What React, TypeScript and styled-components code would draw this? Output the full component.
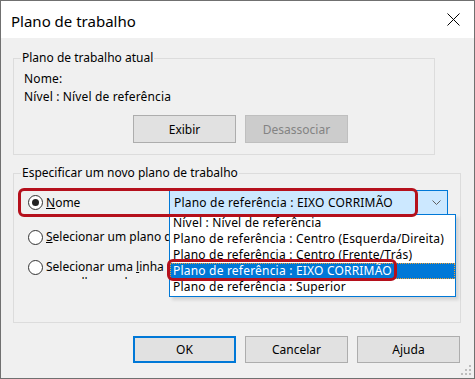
import React from 'react';
import styled, { createGlobalStyle } from 'styled-components';

const GlobalStyle = createGlobalStyle`
  html, body {
    margin: 0;
    padding: 0;
    background: #ffffff;
  }
  * {
    box-sizing: border-box;
  }
`;

const FONT = `"Noto Sans", "Liberation Sans", sans-serif`;

const Window = styled.div`
  width: 475px;
  height: 379px;
  border: 1px solid #707070;
  background: #f0f0f0;
  display: flex;
  flex-direction: column;
  font-family: ${FONT};
  font-size: 12px;
  color: #000;
  position: relative;
  overflow: hidden;
`;

const TitleBar = styled.div`
  height: 37px;
  background: #ffffff;
  display: flex;
  align-items: center;
  justify-content: space-between;
  padding: 0 14px 0 10px;
  flex-shrink: 0;
`;

const Title = styled.div`
  font-size: 15px;
  line-height: 20px;
  margin-top: 2px;
`;

const Body = styled.div`
  flex: 1;
  display: flex;
  flex-direction: column;
  padding: 12px 0 0 12px;
`;

const Group = styled.fieldset<{ $w: number; $h: number; $mt?: number }>`
  position: relative;
  margin: ${(p) => p.$mt ?? 0}px 0 0 0;
  padding: 0 7px;
  width: ${(p) => p.$w}px;
  height: ${(p) => p.$h}px;
  border: 1px solid #dcdcdc;
  min-width: 0;
`;

const Legend = styled.legend`
  padding: 0 1px;
  line-height: 16px;
  font-size: 12px;
`;

const Line = styled.div<{ $mt?: number }>`
  line-height: 16px;
  margin-top: ${(p) => p.$mt ?? 0}px;
  padding-left: 3px;
  letter-spacing: 0.15px;
`;

const ButtonRow = styled.div<{ $mt: number; $pl: number }>`
  display: flex;
  gap: 9px;
  margin-top: ${(p) => p.$mt}px;
  padding-left: ${(p) => p.$pl}px;
`;

const Button = styled.button<{ $h?: number; $default?: boolean }>`
  width: 103px;
  height: ${(p) => p.$h ?? 28}px;
  background: #e1e1e1;
  border: ${(p) => (p.$default ? '2px solid #0078d7' : '1px solid #adadad')};
  font-family: ${FONT};
  font-size: 12px;
  color: #000;
  padding: 0;
  &:disabled {
    background: #cccccc;
    border-color: #bfbfbf;
    color: #838383;
  }
`;

const OptionRow = styled.div<{ $mt: number; $h: number }>`
  position: relative;
  display: flex;
  align-items: center;
  margin-top: ${(p) => p.$mt}px;
  height: ${(p) => p.$h}px;
  padding-left: 7px;
`;

const Radio = styled.span<{ $checked?: boolean; $top?: boolean }>`
  width: 15px;
  height: 15px;
  border-radius: 50%;
  border: 1px solid #333333;
  background: #ffffff;
  flex-shrink: 0;
  display: flex;
  align-items: center;
  justify-content: center;
  align-self: ${(p) => (p.$top ? 'flex-start' : 'center')};
  margin-top: ${(p) => (p.$top ? 1 : 0)}px;
  &::after {
    content: '';
    display: ${(p) => (p.$checked ? 'block' : 'none')};
    width: 7px;
    height: 7px;
    border-radius: 50%;
    background: #222222;
  }
`;

const Label = styled.span<{ $w: number; $clip?: number }>`
  margin-left: 3px;
  width: ${(p) => p.$w}px;
  line-height: 16px;
  white-space: ${(p) => (p.$clip ? 'normal' : 'nowrap')};
  height: ${(p) => (p.$clip ? `${p.$clip}px` : 'auto')};
  overflow: hidden;
  align-self: ${(p) => (p.$clip ? 'flex-start' : 'center')};
  u {
    text-decoration: underline;
  }
`;

const ComboWrap = styled.div`
  position: relative;
  letter-spacing: 0.2px;
`;

const Combo = styled.div`
  width: 279px;
  height: 25px;
  background: #cce8ff;
  border: 1px solid #0078d7;
  display: flex;
  align-items: center;
  justify-content: space-between;
  padding: 0 6px 0 4px;
`;

const DropList = styled.div`
  position: absolute;
  top: 24px;
  left: 0;
  width: 287px;
  background: #ffffff;
  border: 1px solid #0078d7;
  padding: 0 0 1px 0;
  box-shadow: 3px 3px 3px rgba(0, 0, 0, 0.12);
  z-index: 2;
`;

const Item = styled.div<{ $selected?: boolean }>`
  height: 16px;
  line-height: 16px;
  padding-left: 3px;
  white-space: nowrap;
  background: ${(p) => (p.$selected ? '#0078d7' : 'transparent')};
  color: ${(p) => (p.$selected ? '#ffffff' : '#000000')};
  outline: ${(p) => (p.$selected ? '1px dotted #f3a133' : 'none')};
  outline-offset: -1px;
`;

const Mark = styled.div<{ $l: number; $t: number; $w: number; $h: number }>`
  position: absolute;
  left: ${(p) => p.$l}px;
  top: ${(p) => p.$t}px;
  width: ${(p) => p.$w}px;
  height: ${(p) => p.$h}px;
  border: 3px solid #b5101c;
  border-radius: 6px;
  pointer-events: none;
  z-index: 3;
`;

const Footer = styled.div`
  display: flex;
  gap: 9px;
  margin-top: 13px;
  padding-left: 120px;
`;

const Grip = styled.svg`
  position: absolute;
  right: 3px;
  bottom: 3px;
`;

const items = [
  'Nível : Nível de referência',
  'Plano de referência : Centro (Esquerda/Direita)',
  'Plano de referência : Centro (Frente/Trás)',
  'Plano de referência : EIXO CORRIMÃO',
  'Plano de referência : Superior',
];

export default function App() {
  return (
    <>
      <GlobalStyle />
      <Window>
        <TitleBar>
          <Title>Plano de trabalho</Title>
          <svg width="13" height="13" viewBox="0 0 13 13">
            <path d="M0.5 0.5 L12.5 12.5 M12.5 0.5 L0.5 12.5" stroke="#000" strokeWidth="1" />
          </svg>
        </TitleBar>
        <Body>
          <Group $w={422} $h={105}>
            <Legend>Plano de trabalho atual</Legend>
            <Line $mt={5}>Nome:</Line>
            <Line $mt={2}>Nível : Nível de referência</Line>
            <ButtonRow $mt={10} $pl={112}>
              <Button>Exibir</Button>
              <Button disabled>Desassociar</Button>
            </ButtonRow>
          </Group>
          <Group $w={448} $h={158} $mt={10}>
            <Legend>Especificar um novo plano de trabalho</Legend>
            <OptionRow $mt={9} $h={25}>
              <Mark $l={-3} $t={-2} $w={400} $h={29} />
              <Radio $checked />
              <Label $w={123}>
                <u>N</u>ome
              </Label>
              <ComboWrap>
                <Combo>
                  <span>Plano de referência : EIXO CORRIMÃO</span>
                  <svg width="9" height="5" viewBox="0 0 9 5">
                    <path d="M0.5 0.5 L4.5 4.5 L8.5 0.5" stroke="#606060" fill="none" strokeWidth="1" />
                  </svg>
                </Combo>
                <DropList>
                  {items.map((t, i) => (
                    <Item key={t} $selected={i === 3}>
                      {t}
                    </Item>
                  ))}
                </DropList>
                <Mark $l={-2} $t={69} $w={230} $h={22} />
              </ComboWrap>
            </OptionRow>
            <OptionRow $mt={14} $h={16}>
              <Radio />
              <Label $w={140}>
                <u>S</u>elecionar um plano de referência
              </Label>
            </OptionRow>
            <OptionRow $mt={14} $h={20}>
              <Radio $top />
              <Label $w={122} $clip={20}>
                Selecionar uma <u>l</u>inha e escolher o plano
              </Label>
            </OptionRow>
          </Group>
          <Footer>
            <Button $h={27} $default>
              OK
            </Button>
            <Button $h={27}>Cancelar</Button>
            <Button $h={27}>Ajuda</Button>
          </Footer>
        </Body>
        <Grip width="10" height="10" viewBox="0 0 10 10">
          {[
            [8, 0],
            [4, 4],
            [8, 4],
            [0, 8],
            [4, 8],
            [8, 8],
          ].map(([x, y]) => (
            <rect key={`${x}-${y}`} x={x} y={y} width="2" height="2" fill="#bdbdbd" />
          ))}
        </Grip>
      </Window>
    </>
  );
}
